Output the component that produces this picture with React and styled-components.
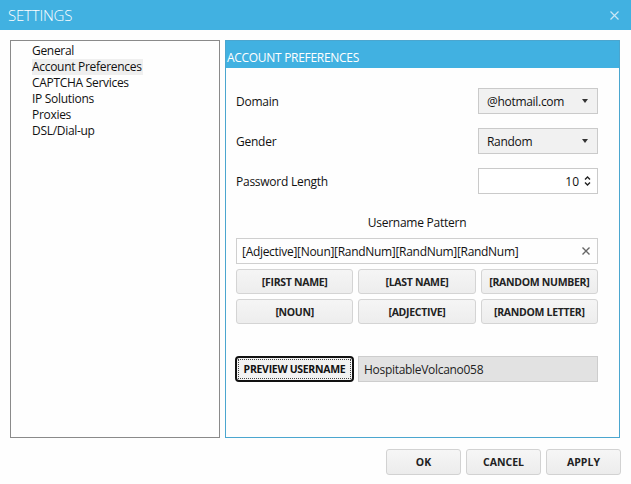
import React from "react";
import styled, { createGlobalStyle } from "styled-components";

const GlobalStyle = createGlobalStyle`
  html, body {
    margin: 0;
    padding: 0;
    background: #ffffff;
  }
  body {
    font-family: "Open Sans", "Noto Sans", "Liberation Sans", sans-serif;
    font-size: 12px;
    color: #111;
  }
`;

const Window = styled.div`
  width: 631px;
  height: 484px;
  display: flex;
  flex-direction: column;
  background: #fefefe;
  overflow: hidden;
`;

const TitleBar = styled.div`
  height: 30px;
  background: #41b1e1;
  display: flex;
  align-items: center;
  justify-content: space-between;
  padding: 0 12px 0 8px;
`;

const Title = styled.span`
  color: #fff;
  font-size: 15px;
  font-weight: 300;
  letter-spacing: -0.2px;
`;

const Close = styled.svg`
  width: 9px;
  height: 9px;
`;

const Body = styled.div`
  display: flex;
  gap: 5px;
  padding: 10px 11px 0 10px;
`;

const NavList = styled.ul`
  list-style: none;
  margin: 0;
  box-sizing: border-box;
  width: 210px;
  height: 398px;
  border: 1px solid #8a8a8a;
  padding: 2px 0 0 21px;
`;

const NavItem = styled.li`
  display: inline-block;
  clear: both;
  float: left;
  height: 16px;
  line-height: 16px;
  font-size: 12px;
  letter-spacing: -0.3px;
  background: ${(p) => (p.active ? "#efefef" : "transparent")};
  padding-right: 1px;
`;

const Panel = styled.section`
  box-sizing: border-box;
  width: 395px;
  height: 398px;
  border: 1px solid #4ba6cf;
  display: flex;
  flex-direction: column;
`;

const PanelHeader = styled.div`
  height: 27px;
  background: #41b1e1;
  color: #fff;
  font-size: 12px;
  letter-spacing: -0.3px;
  display: flex;
  align-items: flex-end;
  padding: 0 0 2px 1px;
  box-sizing: border-box;
  line-height: 16px;
`;

const PanelBody = styled.div`
  padding: 20px 21px 0 10px;
  display: flex;
  flex-direction: column;
`;

const FieldRow = styled.div`
  display: flex;
  align-items: center;
  justify-content: space-between;
  height: 26px;
  margin-bottom: 14px;
`;

const Label = styled.span`
  font-size: 12px;
  letter-spacing: -0.25px;
`;

const Select = styled.div`
  box-sizing: border-box;
  width: 120px;
  height: 26px;
  border: 1px solid #cacaca;
  background: #f1f1f1;
  display: flex;
  align-items: center;
  justify-content: space-between;
  padding: 0 9px 0 8px;
  font-size: 12px;
  letter-spacing: -0.3px;
`;

const Caret = styled.span`
  width: 0;
  height: 0;
  border-left: 3.5px solid transparent;
  border-right: 3.5px solid transparent;
  border-top: 4px solid #333;
`;

const NumberBox = styled.div`
  box-sizing: border-box;
  width: 120px;
  height: 26px;
  border: 1px solid #cacaca;
  background: #fff;
  display: flex;
  align-items: center;
  justify-content: flex-end;
  padding: 0 6px 0 8px;
  gap: 5px;
  font-size: 12px;
`;

const Spinner = styled.svg`
  width: 7px;
  height: 16px;
`;

const SectionLabel = styled.div`
  text-align: center;
  font-size: 12px;
  letter-spacing: -0.25px;
  line-height: 16px;
  margin: 7px 0 7px;
`;

const PatternInput = styled.div`
  box-sizing: border-box;
  height: 26px;
  border: 1px solid #cfcfcf;
  display: flex;
  align-items: center;
  justify-content: space-between;
  padding: 0 7px 0 5px;
  font-size: 12px;
  letter-spacing: -0.3px;
  margin-bottom: 5px;
`;

const Clear = styled.svg`
  width: 8px;
  height: 8px;
`;

const TokenGrid = styled.div`
  display: grid;
  grid-template-columns: repeat(3, 1fr);
  grid-auto-rows: 25px;
  gap: 5px;
`;

const TokenButton = styled.button`
  font-family: inherit;
  font-size: 10.5px;
  font-weight: 700;
  letter-spacing: -0.3px;
  color: #222;
  background: linear-gradient(#f5f5f5, #ededed);
  border: 1px solid #d4d4d4;
  border-radius: 3px;
  padding: 0;
`;

const PreviewRow = styled.div`
  display: flex;
  gap: 4px;
  height: 26px;
  margin-top: 32px;
`;

const PreviewButton = styled.button`
  position: relative;
  width: 119px;
  font-family: inherit;
  font-size: 10.5px;
  font-weight: 700;
  letter-spacing: -0.3px;
  color: #111;
  background: #f2f2f2;
  border: 2px solid #111;
  border-radius: 4px;
  padding: 0;
  margin-left: -1px;
  &::after {
    content: "";
    position: absolute;
    inset: 1px;
    border: 1px dotted #444;
  }
`;

const PreviewBox = styled.div`
  flex: 1;
  background: #e2e2e2;
  border: 1px solid #cdcdcd;
  display: flex;
  align-items: center;
  padding-left: 5px;
  font-size: 12px;
  letter-spacing: -0.3px;
  color: #222;
`;

const Footer = styled.div`
  display: flex;
  justify-content: flex-end;
  gap: 5px;
  padding: 11px 10px 0 0;
`;

const DialogButton = styled.button`
  width: 75px;
  height: 26px;
  font-family: inherit;
  font-size: 10.5px;
  font-weight: 700;
  color: #222;
  background: linear-gradient(#f6f6f6, #ececec);
  border: 1px solid #d2d2d2;
  border-radius: 3px;
  padding: 0;
`;

const navItems = [
  "General",
  "Account Preferences",
  "CAPTCHA Services",
  "IP Solutions",
  "Proxies",
  "DSL/Dial-up",
];

const tokens = [
  "[FIRST NAME]",
  "[LAST NAME]",
  "[RANDOM NUMBER]",
  "[NOUN]",
  "[ADJECTIVE]",
  "[RANDOM LETTER]",
];

export default function App() {
  return (
    <Window>
      <GlobalStyle />
      <TitleBar>
        <Title>SETTINGS</Title>
        <Close viewBox="0 0 9 9">
          <path d="M0.5 0.5 L8.5 8.5 M8.5 0.5 L0.5 8.5" stroke="#c9e6f5" strokeWidth="1.2" />
        </Close>
      </TitleBar>
      <Body>
        <NavList>
          {navItems.map((item) => (
            <NavItem key={item} active={item === "Account Preferences"}>
              {item}
            </NavItem>
          ))}
        </NavList>
        <Panel>
          <PanelHeader>ACCOUNT PREFERENCES</PanelHeader>
          <PanelBody>
            <FieldRow>
              <Label>Domain</Label>
              <Select>
                @hotmail.com
                <Caret />
              </Select>
            </FieldRow>
            <FieldRow>
              <Label>Gender</Label>
              <Select>
                Random
                <Caret />
              </Select>
            </FieldRow>
            <FieldRow>
              <Label>Password Length</Label>
              <NumberBox>
                10
                <Spinner viewBox="0 0 7 16">
                  <path d="M1 6.5 L3.5 4 L6 6.5" fill="none" stroke="#222" strokeWidth="1.4" />
                  <path d="M1 9.5 L3.5 12 L6 9.5" fill="none" stroke="#222" strokeWidth="1.4" />
                </Spinner>
              </NumberBox>
            </FieldRow>
            <SectionLabel>Username Pattern</SectionLabel>
            <PatternInput>
              [Adjective][Noun][RandNum][RandNum][RandNum]
              <Clear viewBox="0 0 8 8">
                <path d="M0.5 0.5 L7.5 7.5 M7.5 0.5 L0.5 7.5" stroke="#666" strokeWidth="1.4" />
              </Clear>
            </PatternInput>
            <TokenGrid>
              {tokens.map((t) => (
                <TokenButton key={t}>{t}</TokenButton>
              ))}
            </TokenGrid>
            <PreviewRow>
              <PreviewButton>PREVIEW USERNAME</PreviewButton>
              <PreviewBox>HospitableVolcano058</PreviewBox>
            </PreviewRow>
          </PanelBody>
        </Panel>
      </Body>
      <Footer>
        <DialogButton>OK</DialogButton>
        <DialogButton>CANCEL</DialogButton>
        <DialogButton>APPLY</DialogButton>
      </Footer>
    </Window>
  );
}
